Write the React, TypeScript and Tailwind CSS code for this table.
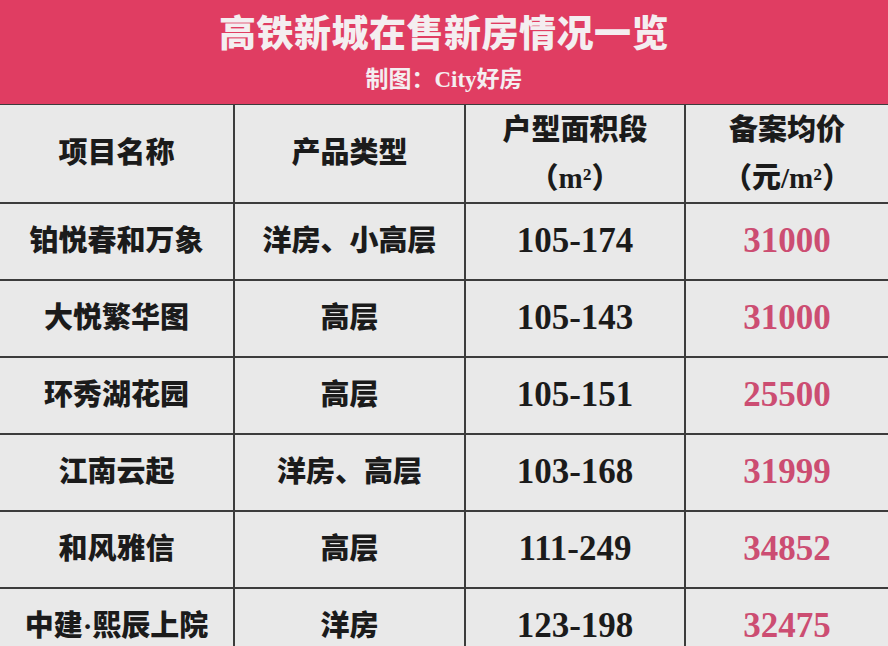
const rows = [
	{ name: "铂悦春和万象", type: "洋房、小高层", area: "105-174", price: "31000" },
	{ name: "大悦繁华图", type: "高层", area: "105-143", price: "31000" },
	{ name: "环秀湖花园", type: "高层", area: "105-151", price: "25500" },
	{ name: "江南云起", type: "洋房、高层", area: "103-168", price: "31999" },
	{ name: "和风雅信", type: "高层", area: "111-249", price: "34852" },
	{ name: "中建·熙辰上院", type: "洋房", area: "123-198", price: "32475" },
]

const font = "font-['Liberation_Serif','Noto_Sans_CJK_SC',serif]"
const line = "border-[#3c3c3c]"

export default function App() {
	return (
		<div className={`w-[888px] h-[646px] overflow-hidden bg-[#e9e9e9] ${font} font-bold`}>
			<div className="h-[104px] bg-[#e03d62] flex flex-col items-center text-[#f4eef0]">
				<div className="mt-[12px] text-[37px] leading-[46px] tracking-[0.5px] font-black">
					高铁新城在售新房情况一览
				</div>
				<div className="mt-[8px] text-[23px] leading-[28px]">制图：City好房</div>
			</div>

			<div className={`grid grid-cols-[235px_231px_220px_1fr] border-t ${line} text-[#1b1b1b]`}>
				<div className={`h-[99px] flex items-center justify-center border-b-2 border-r-2 ${line} text-[29px] font-black`}>
					项目名称
				</div>
				<div className={`h-[99px] flex items-center justify-center border-b-2 border-r-2 ${line} text-[29px] font-black`}>
					产品类型
				</div>
				<div className={`h-[99px] flex flex-col items-center justify-center border-b-2 border-r-2 ${line} text-[29px] leading-[48px] font-black`}>
					<span>户型面积段</span>
					<span>（m²）</span>
				</div>
				<div className={`h-[99px] flex flex-col items-center justify-center border-b-2 ${line} text-[29px] leading-[48px] font-black`}>
					<span>备案均价</span>
					<span>（元/m²）</span>
				</div>

				{rows.map(r => (
					<div key={r.name} className="contents">
						<div className={`h-[77px] flex items-center justify-center border-b-2 border-r-2 ${line} text-[29px] font-black`}>
							{r.name}
						</div>
						<div className={`h-[77px] flex items-center justify-center border-b-2 border-r-2 ${line} text-[29px] font-black`}>
							{r.type}
						</div>
						<div className={`h-[77px] flex items-center justify-center border-b-2 border-r-2 ${line} text-[35px]`}>
							{r.area}
						</div>
						<div className={`h-[77px] flex items-center justify-center border-b-2 ${line} text-[35px] text-[#cc4d72]`}>
							{r.price}
						</div>
					</div>
				))}
			</div>
		</div>
	)
}
